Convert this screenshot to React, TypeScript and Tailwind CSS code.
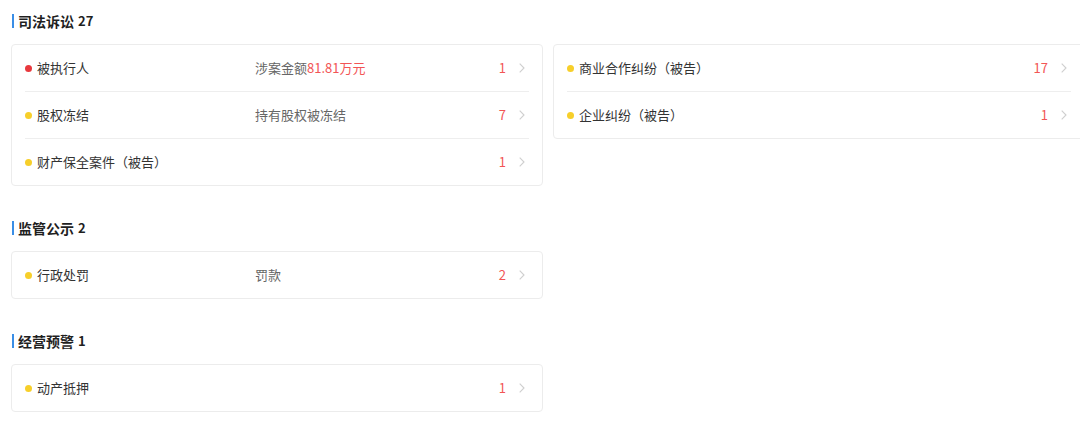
import React from "react";

type Row = {
  label: string;
  dot: "red" | "yellow";
  desc?: React.ReactNode;
  count: string;
};

const FONT = {
  fontFamily: '"Noto Sans CJK SC", "Noto Sans", "Liberation Sans", sans-serif',
};

function Chevron() {
  return (
    <svg width="6" height="10" viewBox="0 0 6 10" className="ml-[13px] mr-[4px] shrink-0">
      <path d="M0.7 0.7 L5 5 L0.7 9.3" fill="none" stroke="#cfcfcf" strokeWidth="1.1" />
    </svg>
  );
}

function Card({ rows }: { rows: Row[] }) {
  return (
    <div className="w-[532px] rounded-[4px] border border-[#ececec] bg-white px-[13px]">
      {rows.map((r, i) => (
        <div
          key={i}
          className={
            "box-content flex h-[46px] items-center text-[13px] " +
            (i < rows.length - 1 ? "border-b border-[#eeeeee]" : "")
          }
        >
          <div className="flex w-[230px] shrink-0 items-center">
            <span
              className={
                "mr-[5px] h-[7px] w-[7px] shrink-0 rounded-full " +
                (r.dot === "red" ? "bg-[#e8383d]" : "bg-[#f7cf2a]")
              }
            />
            <span className="text-[#333333]">{r.label}</span>
          </div>
          <div className="flex-1 text-[#666666]">{r.desc}</div>
          <span className="text-[#f25555]">{r.count}</span>
          <Chevron />
        </div>
      ))}
    </div>
  );
}

function Title({ text, num }: { text: string; num: string }) {
  return (
    <div className="flex h-[20px] items-center">
      <span className="ml-[1px] mr-[4px] h-[14px] w-[2px] bg-[#3a8ee6]" />
      <span className="text-[14px] font-bold text-[#1f1f1f]">{text}</span>
      <span className="ml-[4px] text-[13px] font-bold text-[#1f1f1f]">{num}</span>
    </div>
  );
}

export default function App() {
  return (
    <div className="h-[423px] w-[1080px] overflow-hidden bg-white pl-[11px] pt-[11px]" style={FONT}>
      <div className="w-[1074px]">
        <Title text="司法诉讼" num="27" />
        <div className="mt-[13px] grid grid-cols-[532px_532px] items-start gap-x-[10px]">
          <Card
            rows={[
              {
                label: "被执行人",
                dot: "red",
                desc: (
                  <>
                    涉案金额<span className="text-[#f25555]">81.81万元</span>
                  </>
                ),
                count: "1",
              },
              { label: "股权冻结", dot: "yellow", desc: "持有股权被冻结", count: "7" },
              { label: "财产保全案件（被告）", dot: "yellow", count: "1" },
            ]}
          />
          <Card
            rows={[
              { label: "商业合作纠纷（被告）", dot: "yellow", count: "17" },
              { label: "企业纠纷（被告）", dot: "yellow", count: "1" },
            ]}
          />
        </div>

        <div className="mt-[32px]">
          <Title text="监管公示" num="2" />
          <div className="mt-[13px]">
            <Card rows={[{ label: "行政处罚", dot: "yellow", desc: "罚款", count: "2" }]} />
          </div>
        </div>

        <div className="mt-[32px]">
          <Title text="经营预警" num="1" />
          <div className="mt-[13px]">
            <Card rows={[{ label: "动产抵押", dot: "yellow", count: "1" }]} />
          </div>
        </div>
      </div>
    </div>
  );
}
